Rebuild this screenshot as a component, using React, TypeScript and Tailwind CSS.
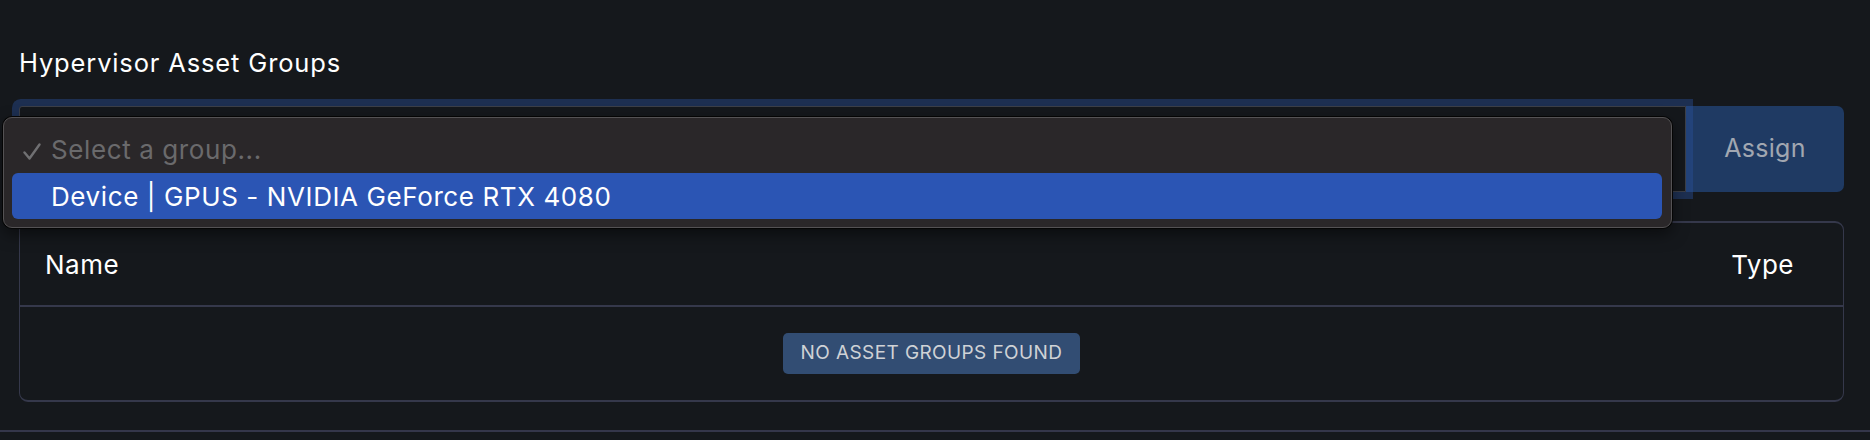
import { useState } from 'react'

const GROUPS = ['Device | GPUS - NVIDIA GeForce RTX 4080']

function CheckMark() {
  return (
    <svg width="18" height="17" viewBox="0 0 18 17" fill="none" stroke="currentColor" strokeWidth="2.4" strokeLinecap="round" strokeLinejoin="round">
      <path d="M1.5 9.5 L6.5 15.5 L16.5 1.5" />
    </svg>
  )
}

function GroupSelect({ open }: { open: boolean }) {
  return (
    <div className="relative flex h-[86px]">
      {/* select with focus ring */}
      <div className="relative z-10 flex-1 rounded-l-[3px] border border-[#3c3f47] bg-[#15181c] shadow-[0_0_0_7px_rgba(40,80,155,0.42)]" />
      <button className="w-[158px] rounded-r-[7px] bg-[#1f3a63] text-[25px] tracking-[0.3px] text-[#a1a7b1]">Assign</button>

      {/* native-looking dropdown list, lies over the select */}
      {open && (
        <div className="absolute left-[-16px] top-[11px] z-20 w-[1669px] rounded-[9px] border border-[#545254] bg-[#2a2729] py-[8px] pl-[8px] pr-[9px] shadow-[0_0_0_1px_#050505,0_6px_16px_rgba(0,0,0,0.5)]">
          <div className="relative flex h-[47px] items-center pl-[39px] text-[26px] tracking-[0.6px] text-[#6a6a6c]">
            <span className="absolute left-[11px] top-[17px] text-[#707072]">
              <CheckMark />
            </span>
            Select a group...
          </div>
          {GROUPS.map(g => (
            <div key={g} className="flex h-[46px] items-center rounded-[6px] bg-[#2b55b4] pl-[39px] text-[26px] tracking-[0.6px] text-white">
              {g}
            </div>
          ))}
        </div>
      )}
    </div>
  )
}

export default function App() {
  const [open] = useState(true)
  const groups: string[] = []

  return (
    <div className="min-h-[440px] bg-[#15181c] font-['Inter','Liberation_Sans',sans-serif]">
      <section className="border-b-2 border-[#34364a] pb-[28px] pl-[19px] pr-[26px] pt-[47px]">
        <h2 className="text-[25.5px] leading-[31px] tracking-[0.85px] text-white">Hypervisor Asset Groups</h2>

        <div className="mt-[28px]">
          <GroupSelect open={open} />
        </div>

        <div className="mt-[29px] rounded-[9px] border-x border-y-2 border-[#35384b]">
          <div className="flex h-[84px] items-center justify-between border-b-2 border-[#35384b] pl-[25px] pr-[49px] text-[26px] tracking-[0.5px] text-white">
            <span>Name</span>
            <span>Type</span>
          </div>
          <div className="flex h-[93px] items-center justify-center">
            {groups.length === 0 && (
              <span className="flex h-[41px] items-center rounded-[5px] bg-[#324d73] px-[18px] text-[19px] uppercase tracking-[0.4px] text-[#cfd2d6]">
                No asset groups found
              </span>
            )}
          </div>
        </div>
      </section>
    </div>
  )
}
